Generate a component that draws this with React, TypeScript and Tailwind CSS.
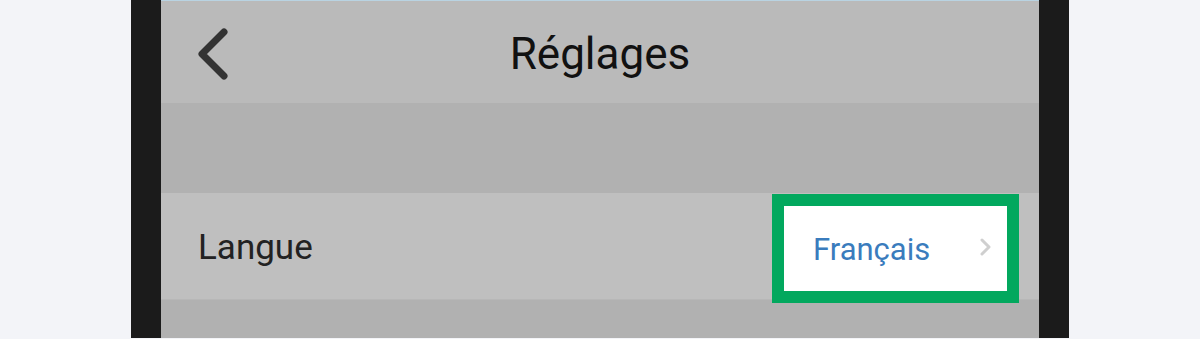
import React from "react";

export default function App() {
  return (
    <div
      className="w-[1200px] h-[339px] bg-[#f3f4f8] flex overflow-hidden"
      style={{ fontFamily: "Roboto, 'Noto Sans', sans-serif" }}
    >
      <div className="ml-[131px] w-[938px] h-[338px] bg-[#1b1b1b] px-[30px] flex">
        <div className="flex-1 flex flex-col bg-[#b1b1b1]">
          <div className="h-px bg-[#b9d3e2]" />
          <div className="h-[102px] bg-[#bababa] relative flex items-center justify-center">
            <svg
              className="absolute left-[35px] top-[27px]"
              width="34"
              height="52"
              viewBox="0 0 34 52"
            >
              <path
                d="M28 4 L6 26 L28 48"
                fill="none"
                stroke="#333333"
                strokeWidth="7"
                strokeLinecap="round"
                strokeLinejoin="round"
              />
            </svg>
            <span className="text-[44px] leading-none text-[#111111] mt-[4px]">
              Réglages
            </span>
          </div>
          <div className="h-[90px]" />
          <div className="h-[107px] bg-[#bfbfbf] border-b border-[#b7b7b7] flex items-center justify-between pl-[37px] pr-[20px]">
            <span className="text-[35px] leading-none text-[#222222] mt-[2px]">
              Langue
            </span>
            <div className="self-start mt-[1px] w-[247px] h-[109px] border-[12px] border-[#02a85e] bg-white flex items-center pl-[29px] pr-[14px]">
              <span className="text-[31px] leading-none text-[#3a7cbd] flex-1 mt-[1px]">
                Français
              </span>
              <svg width="14" height="20" viewBox="0 0 14 20" className="mt-[-3px]">
                <path
                  d="M3 3 L10 10 L3 17"
                  fill="none"
                  stroke="#cfcfcf"
                  strokeWidth="3"
                  strokeLinecap="round"
                  strokeLinejoin="round"
                />
              </svg>
            </div>
          </div>
        </div>
      </div>
    </div>
  );
}
